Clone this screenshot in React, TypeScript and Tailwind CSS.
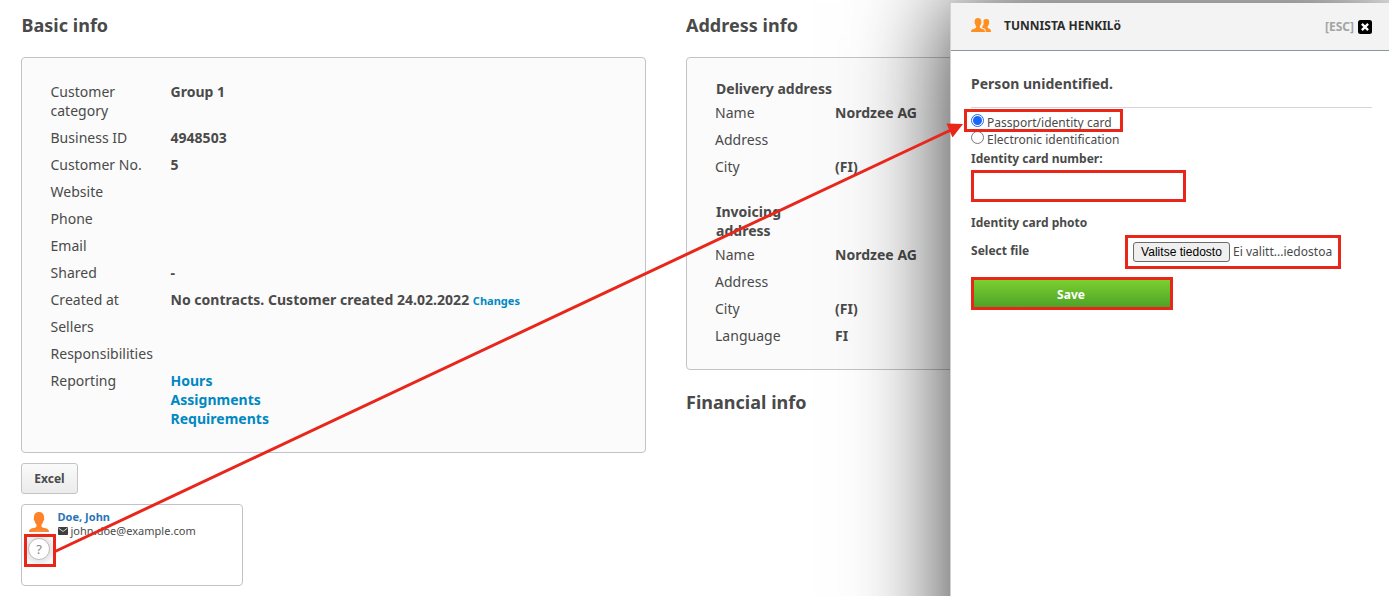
import type { ReactNode } from "react";

type RowProps = { label: string; children?: ReactNode };

function Row({ label, children }: RowProps) {
  return (
    <div className="flex py-1">
      <dt className="w-[120px] shrink-0 pr-2">{label}</dt>
      <dd className="font-bold whitespace-nowrap">{children}</dd>
    </div>
  );
}

function PersonIcon({ className }: { className?: string }) {
  return (
    <svg viewBox="0 0 20 20" fill="currentColor" className={className}>
      <path d="M10 0C6.700 0 5 2.200 5 5.200c0 1-.3 1.200-.2 2.200.2.900.6 1.100.8 1.500.4 1.600 1 2.800 1.900 3.500v2c-.2.900-1.300 1.200-3.100 1.600C1.500 16.600 0 17.300 0 20h20c0-2.700-1.500-3.400-4.400-4-1.800-.4-2.900-.7-3.100-1.600v-2c.9-.7 1.500-1.900 1.900-3.500.2-.4.600-.6.800-1.500.1-1-.2-1.200-.2-2.200C15 2.200 13.300 0 10 0Z" />
    </svg>
  );
}

function PeopleIcon({ className }: { className?: string }) {
  return (
    <svg viewBox="0 0 20 14" fill="currentColor" className={className}>
      <path d="M15.400.9c-1.600 0-2.600.6-3 1.700.2 1 .2 1.500.1 2.300.3.700.1 1.800-.5 2.300-.2.700-.5 1.300-.8 1.600v.9c2 .7 3.300 1.100 3.500 3v1.300h5.300c0-2.200-.5-3-2.200-3.600-.9-.3-1.200-.5-1.200-1.100v-.8c.6-.5.900-1.100 1.100-1.900.5-.3.600-1.100.3-1.600C18.600 2.500 17.900.900 15.400.9Z" />
      <path d="M6.900 0C4.600 0 3.600 1.400 3.700 3.500v.6c-.4.600-.2 1.500.4 1.900.2 1 .6 1.700 1.100 2.200v1c0 .8-.8 1-2.200 1.500C.9 11.300 0 12 0 14h14c0-2-.9-2.700-3-3.300-1.400-.5-2.200-.7-2.200-1.500v-1c.5-.5.9-1.200 1.100-2.200.6-.4.800-1.300.4-1.900v-.6C10.400 1.400 9.200 0 6.900 0Z" />
    </svg>
  );
}

function MailIcon({ className }: { className?: string }) {
  return (
    <svg viewBox="0 0 10 8" className={className}>
      <rect width="10" height="8" rx="0.8" fill="#3f3f3f" />
      <path d="M.6 1.200 5 4.500l4.400-3.300" fill="none" stroke="#fff" strokeWidth="0.800" />
    </svg>
  );
}

function BasicInfo() {
  return (
    <section className="w-[625px] shrink-0">
      <h2 className="pl-[0.500px] text-[18px] leading-6 font-bold">Basic info</h2>
      <dl className="mt-5 h-[396px] rounded-[4px] border border-[#bfc4ca] bg-[#fbfbfb] px-[28.5px] pt-5">
        <Row label="Customer category">Group 1</Row>
        <Row label="Business ID">4948503</Row>
        <Row label="Customer No.">5</Row>
        <Row label="Website" />
        <Row label="Phone" />
        <Row label="Email" />
        <Row label="Shared">-</Row>
        <Row label="Created at">
          No contracts. Customer created 24.02.2022{" "}
          <a className="text-[11px] leading-none text-[#0088c2]">Changes</a>
        </Row>
        <Row label="Sellers" />
        <Row label="Responsibilities" />
        <Row label="Reporting">
          <div className="flex flex-col text-[#0088c2]">
            <a>Hours</a>
            <a>Assignments</a>
            <a>Requirements</a>
          </div>
        </Row>
      </dl>

      <button className="mt-2.5 block h-[31px] w-[57px] rounded-[3px] border border-[#c4c4c4] bg-linear-to-b from-[#fafafa] to-[#ebebeb] text-[12px] font-bold">
        Excel
      </button>

      <div className="mt-2.5 flex h-[82px] w-[222px] gap-2 rounded-[4px] border border-[#bfc4ca] bg-white pt-[7px] pl-[7px]">
        <div className="flex w-5 flex-col items-center">
          <PersonIcon className="h-5 w-5 text-[#fd832a]" />
          <div className="relative mt-[6px] flex size-[22px] shrink-0 items-center justify-center rounded-full border border-[#bbb] bg-white text-[13px] text-[#888] shadow-[0_0_5px_4px_#e6e6e6]">
            ?
          </div>
        </div>
        <div className="-mt-0.5 pl-[0.500px] text-[11px] leading-[14px]">
          <a className="block font-bold text-[#2a74b8]">Doe, John</a>
          <div className="flex items-center gap-[3px]">
            <MailIcon className="h-2 w-2.5" />
            john.doe@example.com
          </div>
        </div>
      </div>
    </section>
  );
}

function AddressInfo() {
  return (
    <section className="w-[625px] shrink-0">
      <h2 className="text-[18px] leading-6 font-bold">Address info</h2>
      <div className="mt-5 h-[313px] rounded-[4px] border border-[#bfc4ca] bg-[#fbfbfb] px-7 pt-[21px]">
        <h3 className="w-[130px] pl-px font-bold whitespace-nowrap">Delivery address</h3>
        <dl className="mt-px">
          <Row label="Name">Nordzee AG</Row>
          <Row label="Address" />
          <Row label="City">(FI)</Row>
        </dl>
        <h3 className="mt-[22px] w-[90px] pl-px font-bold">Invoicing address</h3>
        <dl className="mt-px">
          <Row label="Name">Nordzee AG</Row>
          <Row label="Address" />
          <Row label="City">(FI)</Row>
          <Row label="Language">FI</Row>
        </dl>
      </div>
      <h2 className="mt-5 text-[18px] leading-6 font-bold">Financial info</h2>
    </section>
  );
}

function Radio({ checked }: { checked?: boolean }) {
  return checked ? (
    <span className="flex size-[13px] items-center justify-center rounded-full border border-[#1f69f0] bg-white">
      <span className="size-[9px] rounded-full bg-[#1a66f5]" />
    </span>
  ) : (
    <span className="size-[13px] rounded-full border border-[#767676] bg-white" />
  );
}

function IdentifyPanel() {
  return (
    <aside className="absolute top-[3px] right-0 h-[800px] w-[439px] border-l border-[#d2d2d2] bg-white text-[12px] leading-4 shadow-[0_0_92px_rgba(0,0,0,0.8)]">
      <header className="flex h-12 items-center border-b border-[#8b969f] bg-[#f3f3f3] pr-[17px] pl-5">
        <PeopleIcon className="mb-[3px] h-3.5 w-5 text-[#ff9020]" />
        <h1 className="mb-px ml-[13px] font-bold text-[#2b2b2b]">TUNNISTA HENKILö</h1>
        <span className="ml-auto font-bold text-[#a3a3a3]">[ESC]</span>
        <svg viewBox="0 0 14 14" className="ml-1 size-3.5">
          <rect width="14" height="14" rx="2.500" />
          <path d="m3.900 3.900 6.200 6.200m0-6.200-6.200 6.200" stroke="#fff" strokeWidth="2.300" />
        </svg>
      </header>

      <div className="pr-[17px] pl-5">
        <p className="border-b border-[#d4d4d4] pt-[23px] pb-[14px] text-[14px] leading-[19px] font-bold">
          Person unidentified.
        </p>
        <div className="mt-[6px] flex gap-[3px]">
          <Radio checked />
          <span className="mt-px">Passport/identity card</span>
        </div>
        <div className="flex gap-[3px]">
          <Radio />
          <span className="mt-px">Electronic identification</span>
        </div>
        <p className="mt-[3px] font-bold">Identity card number:</p>
        <div className="mt-[3px] h-8 w-[215px] border-[3px] border-[#e8261a]" />
        <p className="mt-[13px] font-bold">Identity card photo</p>
        <div className="mt-1 flex items-center">
          <span className="w-[154px] pb-0.5 font-bold">Select file</span>
          <div className="flex h-[34px] w-[216px] items-center border-[3px] border-[#e8261a] pb-px pl-[5px]">
            <button className="h-5 w-[97px] rounded-[3px] border border-[#6b6b6b] bg-[#efefef] font-['Liberation_Sans',sans-serif] text-[12px] leading-none whitespace-nowrap text-black">
              Valitse tiedosto
            </button>
            <span className="ml-[3px] whitespace-nowrap">Ei valitt...iedostoa</span>
          </div>
        </div>
        <button className="mt-2 block h-[33px] w-[202px] border-[3px] border-[#e8261a] bg-linear-to-b from-[#7bd02f] to-[#4da328] pt-0.5 pr-0.5 font-bold text-white">
          Save
        </button>
      </div>
    </aside>
  );
}

// Red outlines and arrow leading from the person card to the panel
function Callouts() {
  return (
    <>
      <div className="pointer-events-none absolute top-[534px] left-[23.500px] h-[33px] w-8 border-[3px] border-[#e8261a]" />
      <div className="pointer-events-none absolute top-[108.500px] left-[963.500px] h-[23px] w-[159px] border-[3px] border-[#e8261a]" />
      <svg
        viewBox="0 0 1389 596"
        className="pointer-events-none absolute inset-0 h-[596px] w-[1389px] text-[#e8261a]"
      >
        <path d="M55 551.500 953 129" stroke="currentColor" strokeWidth="3" />
        <path d="m946.500 123.500 16.500.5-10.500 13.500Z" fill="currentColor" />
      </svg>
    </>
  );
}

export default function App() {
  return (
    <div className="relative h-[596px] w-[1389px] overflow-hidden bg-white font-['Noto_Sans',sans-serif] text-[14px] leading-[19px] tracking-[0.020px] text-[#4a4a4a]">
      <main className="flex gap-10 pt-[13px] pl-[21px]">
        <BasicInfo />
        <AddressInfo />
      </main>
      <IdentifyPanel />
      <Callouts />
    </div>
  );
}
